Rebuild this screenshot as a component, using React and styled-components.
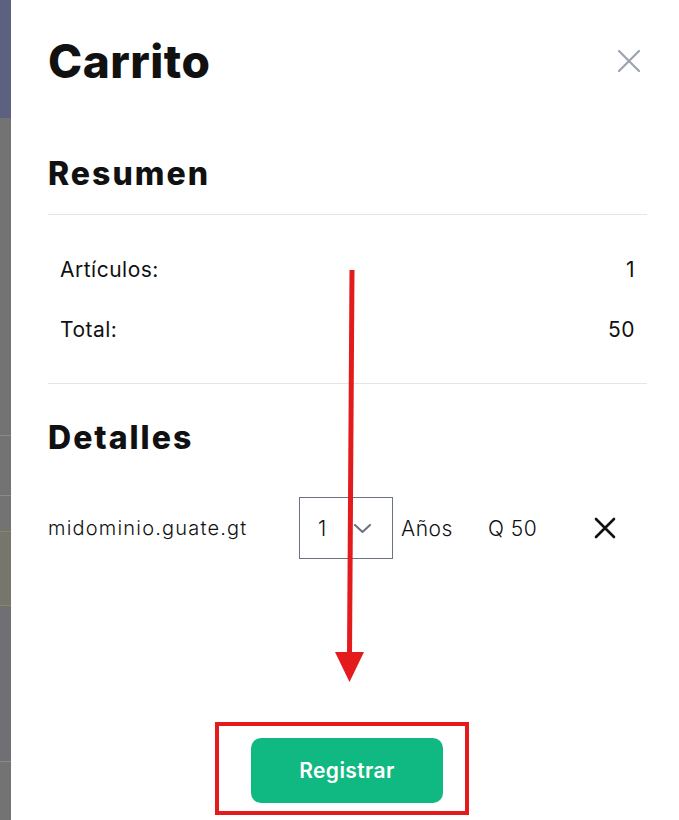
import React from "react";
import styled, { createGlobalStyle } from "styled-components";

const GlobalStyle = createGlobalStyle`
    html, body {
        margin: 0;
        padding: 0;
        height: 100%;
        background: #ffffff;
    }
    body {
        font-family: "Inter", "Noto Sans", sans-serif;
        color: #111111;
    }
    * {
        box-sizing: border-box;
    }
`

const PageWrapper = styled.div`
    width: 100%;
    height: 820px;
    display: flex;
    overflow: hidden;
    position: relative;
`

const Backdrop = styled.div`
    width: 11px;
    height: 100%;
    display: flex;
    flex-direction: column;
    background-color: #737373;
`

const BackdropBand = styled.div`
    height: ${({ h }) => h}px;
    background-color: ${({ color }) => color || "transparent"};
    border-bottom: ${({ line }) => (line ? `1px solid ${line}` : "none")};
`

const Panel = styled.aside`
    flex: 1;
    height: 100%;
    background-color: #ffffff;
    padding: 0 32px 0 37px;
    display: flex;
    flex-direction: column;
`

const Header = styled.div`
    display: flex;
    justify-content: space-between;
    align-items: center;
    margin-top: 36px;
    height: 50px;
`

const Title = styled.h1`
    margin: 0;
    font-size: 46px;
    font-weight: 800;
    line-height: 50px;
    letter-spacing: 0.5px;
`

const CloseButton = styled.button`
    width: 36px;
    height: 36px;
    border: none;
    background: none;
    padding: 0;
    display: flex;
    align-items: center;
    justify-content: center;
    cursor: pointer;
`

const SectionTitle = styled.h2`
    margin: ${({ top }) => top}px 0 0 0;
    font-size: 32px;
    font-weight: 800;
    line-height: 40px;
    letter-spacing: 2px;
`

const Divider = styled.hr`
    margin: ${({ top }) => top}px 0 0 0;
    border: none;
    border-top: 1px solid #e5e5e5;
    height: 0;
`

const SummaryList = styled.div`
    margin-top: 24px;
    display: flex;
    flex-direction: column;
`

const SummaryRow = styled.div`
    height: 60px;
    padding: 0 12px;
    display: flex;
    align-items: center;
    justify-content: space-between;
    font-size: 21px;
    letter-spacing: 0.5px;
`

const DetailRow = styled.div`
    margin-top: 39px;
    height: 62px;
    display: flex;
    align-items: center;
    font-size: 21px;
    font-weight: 300;
    letter-spacing: 0.5px;
`

const Domain = styled.span`
    width: 251px;
    font-size: 20px;
    letter-spacing: 1.2px;
`

const QtySelect = styled.div`
    width: 94px;
    height: 62px;
    border: 1px solid #6b7280;
    display: flex;
    align-items: center;
    justify-content: space-between;
    padding: 0 21px 0 18px;
`

const Cell = styled.span`
    width: ${({ w }) => w}px;
    padding-left: ${({ pl }) => pl || 0}px;
`

const RemoveButton = styled.button`
    border: none;
    background: none;
    padding: 0;
    width: 22px;
    height: 22px;
    display: flex;
    cursor: pointer;
`

const ButtonArea = styled.div`
    margin-top: 163px;
    padding-left: 167px;
    display: flex;
`

const Highlight = styled.div`
    border: 4px solid #e31b1d;
    padding: 12px 22px 8px 32px;
`

const RegisterButton = styled.button`
    width: 192px;
    height: 65px;
    border: none;
    border-radius: 10px;
    background-color: #10b981;
    color: #ffffff;
    font-family: "Inter", "Noto Sans", sans-serif;
    font-size: 21px;
    font-weight: 600;
    letter-spacing: 0.4px;
    cursor: pointer;
`

const ArrowOverlay = styled.svg`
    position: absolute;
    left: 0;
    top: 0;
    pointer-events: none;
`

export default function App() {
    return (
        <>
            <GlobalStyle />
            <PageWrapper>
                <Backdrop>
                    <BackdropBand h={118} color="#5c6081" />
                    <BackdropBand h={318} line="#8a8a8a" />
                    <BackdropBand h={60} line="#8a8a8a" />
                    <BackdropBand h={36} line="#8c8660" />
                    <BackdropBand h={74} color="#77766c" line="#8c8660" />
                    <BackdropBand h={156} color="#6f6f74" line="#8a8a8a" />
                </Backdrop>
                <Panel>
                    <Header>
                        <Title>Carrito</Title>
                        <CloseButton aria-label="Cerrar">
                            <svg width="22" height="22" viewBox="0 0 22 22" fill="none" stroke="#9ca3af" strokeWidth="2.2" strokeLinecap="round">
                                <path d="M1 1 L21 21 M21 1 L1 21" />
                            </svg>
                        </CloseButton>
                    </Header>

                    <SectionTitle top={68}>Resumen</SectionTitle>
                    <Divider top={20} />
                    <SummaryList>
                        <SummaryRow>
                            <span>Artículos:</span>
                            <span>1</span>
                        </SummaryRow>
                        <SummaryRow>
                            <span>Total:</span>
                            <span>50</span>
                        </SummaryRow>
                    </SummaryList>
                    <Divider top={24} />

                    <SectionTitle top={34}>Detalles</SectionTitle>
                    <DetailRow>
                        <Domain>midominio.guate.gt</Domain>
                        <QtySelect>
                            <span>1</span>
                            <svg width="17" height="9" viewBox="0 0 17 9" fill="none" stroke="#6b7280" strokeWidth="2" strokeLinecap="round" strokeLinejoin="round">
                                <path d="M1 1 L8.5 8 L16 1" />
                            </svg>
                        </QtySelect>
                        <Cell w={95} pl={8}>Años</Cell>
                        <Cell w={106}>Q 50</Cell>
                        <RemoveButton aria-label="Eliminar">
                            <svg width="22" height="22" viewBox="0 0 22 22" fill="none" stroke="#111111" strokeWidth="2.6" strokeLinecap="round">
                                <path d="M2 2 L20 20 M20 2 L2 20" />
                            </svg>
                        </RemoveButton>
                    </DetailRow>

                    <ButtonArea>
                        <Highlight>
                            <RegisterButton>Registrar</RegisterButton>
                        </Highlight>
                    </ButtonArea>
                </Panel>

                <ArrowOverlay width="679" height="820" viewBox="0 0 679 820">
                    <path d="M352 270 L349.5 656" stroke="#e31b1d" strokeWidth="5" />
                    <path d="M335 652 L364 652 L349.5 682 Z" fill="#e31b1d" />
                </ArrowOverlay>
            </PageWrapper>
        </>
    );
}
